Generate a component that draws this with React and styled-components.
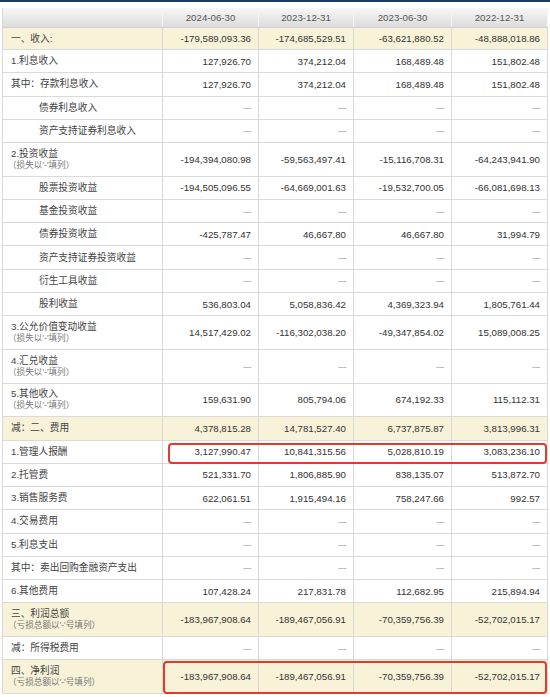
import React from 'react';
import styled, { createGlobalStyle } from 'styled-components';

const GlobalStyle = createGlobalStyle`
  body {
    margin: 0;
    background: #fff;
    font-family: "Liberation Sans", Arial, "Noto Sans CJK SC", sans-serif;
  }
`;

const D4 = ['---', '---', '---', '---'];
const LOSS = "（损失以'-'填列）";
const DEFICIT = "（亏损总额以'-'号填列）";
const PROFIT = ['-183,967,908.64', '-189,467,056.91', '-70,359,756.39', '-52,702,015.17'];
const INTEREST = ['127,926.70', '374,212.04', '168,489.48', '151,802.48'];

const dates = ['2024-06-30', '2023-12-31', '2023-06-30', '2022-12-31'];

const rows = [
  { label: '一、收入:', values: ['-179,589,093.36', '-174,685,529.51', '-63,621,880.52', '-48,888,018.86'], hl: true, h: 22 },
  { label: '1.利息收入', values: INTEREST },
  { label: '其中：存款利息收入', values: INTEREST },
  { label: '债券利息收入', indent: true, values: D4 },
  { label: '资产支持证券利息收入', indent: true, values: D4 },
  { label: '2.投资收益', sub: LOSS, values: ['-194,394,080.98', '-59,563,497.41', '-15,116,708.31', '-64,243,941.90'] },
  { label: '股票投资收益', indent: true, values: ['-194,505,096.55', '-64,669,001.63', '-19,532,700.05', '-66,081,698.13'] },
  { label: '基金投资收益', indent: true, values: D4 },
  { label: '债券投资收益', indent: true, values: ['-425,787.47', '46,667.80', '46,667.80', '31,994.79'] },
  { label: '资产支持证券投资收益', indent: true, values: D4 },
  { label: '衍生工具收益', indent: true, values: D4 },
  { label: '股利收益', indent: true, values: ['536,803.04', '5,058,836.42', '4,369,323.94', '1,805,761.44'] },
  { label: '3.公允价值变动收益', sub: LOSS, values: ['14,517,429.02', '-116,302,038.20', '-49,347,854.02', '15,089,008.25'] },
  { label: '4.汇兑收益', sub: LOSS, values: D4 },
  { label: '5.其他收入', sub: LOSS, values: ['159,631.90', '805,794.06', '674,192.33', '115,112.31'] },
  { label: '减：二、费用', hl: true, values: ['4,378,815.28', '14,781,527.40', '6,737,875.87', '3,813,996.31'] },
  { label: '1.管理人报酬', box: 'inset', values: ['3,127,990.47', '10,841,315.56', '5,028,810.19', '3,083,236.10'] },
  { label: '2.托管费', values: ['521,331.70', '1,806,885.90', '838,135.07', '513,872.70'] },
  { label: '3.销售服务费', values: ['622,061.51', '1,915,494.16', '758,247.66', '992.57'] },
  { label: '4.交易费用', values: D4 },
  { label: '5.利息支出', values: D4 },
  { label: '其中：卖出回购金融资产支出', values: D4 },
  { label: '6.其他费用', values: ['107,428.24', '217,831.78', '112,682.95', '215,894.94'] },
  { label: '三、利润总额', sub: DEFICIT, hl: true, values: PROFIT },
  { label: '减：所得税费用', values: D4 },
  { label: '四、净利润', sub: DEFICIT, hl: true, box: 'full', values: PROFIT },
];

const TopBar = styled.div`
  height: 2px;
  background: #1b3c61;
`;

const Wrapper = styled.div`
  padding: 6px 3px 0 2px;
`;

const Table = styled.div`
  width: 545px;
  border-left: 1px solid #d9d9d9;
`;

const Row = styled.div`
  display: grid;
  grid-template-columns: 160px 96px 95px 98px 96px;
  height: ${p => p.$h}px;
  background: ${p => (p.$hl ? '#f8f2d9' : '#fff')};
  border-bottom: 1px solid #dadada;
  box-sizing: border-box;
`;

const HeaderRow = styled(Row)`
  background: linear-gradient(#f7f7f7, #dcdcdc);
  border-bottom: 1px solid #d0d0d0;
`;

const HeadCell = styled.div`
  grid-row: 1;
  grid-column: ${p => p.$col};
  display: flex;
  align-items: center;
  justify-content: center;
  border-right: 1px solid #f4f4f4;
  font-size: 9.7px;
  color: #555;
`;

const LabelCell = styled.div`
  grid-row: 1;
  grid-column: 1;
  display: flex;
  flex-direction: column;
  justify-content: center;
  padding-left: ${p => (p.$indent ? 36 : 8)}px;
  border-right: 1px solid #d9d9d9;
  font-size: 9.7px;
  color: #444;
  line-height: 12px;
  white-space: nowrap;
`;

const SubNote = styled.span`
  font-size: 8.6px;
  color: #777;
  line-height: 11px;
  margin-left: -3px;
`;

const NumCell = styled.div`
  grid-row: 1;
  grid-column: ${p => p.$col};
  display: flex;
  align-items: center;
  justify-content: flex-end;
  padding-right: 7px;
  border-right: 1px solid #d9d9d9;
  font-size: 9.7px;
  color: ${p => (p.$empty ? '#a0a0a0' : '#333')};
  letter-spacing: ${p => (p.$empty ? '-0.6px' : '0')};
  white-space: nowrap;
`;

const Highlight = styled.div`
  grid-row: 1;
  grid-column: 2 / 6;
  margin: ${p => (p.$inset ? '2px 1px -1px 5px' : '1px 1px -1px 0')};
  border: 2px solid #e8372b;
  border-radius: 4px;
  pointer-events: none;
`;

function DataRow({ row }) {
  const h = row.h || (row.sub ? 33.7 : 23.25);
  return (
    <Row $h={h} $hl={row.hl}>
      <LabelCell $indent={row.indent}>
        <span>{row.label}</span>
        {row.sub && <SubNote>{row.sub}</SubNote>}
      </LabelCell>
      {row.values.map((v, i) => (
        <NumCell key={i} $col={i + 2} $empty={v === '---'}>
          {v}
        </NumCell>
      ))}
      {row.box && <Highlight $inset={row.box === 'inset'} />}
    </Row>
  );
}

export default function App() {
  return (
    <>
      <GlobalStyle />
      <TopBar />
      <Wrapper>
        <Table>
          <HeaderRow $h={20}>
            <HeadCell $col={1} />
            {dates.map((d, i) => (
              <HeadCell key={d} $col={i + 2}>{d}</HeadCell>
            ))}
          </HeaderRow>
          {rows.map((r, i) => (
            <DataRow key={i} row={r} />
          ))}
        </Table>
      </Wrapper>
    </>
  );
}
